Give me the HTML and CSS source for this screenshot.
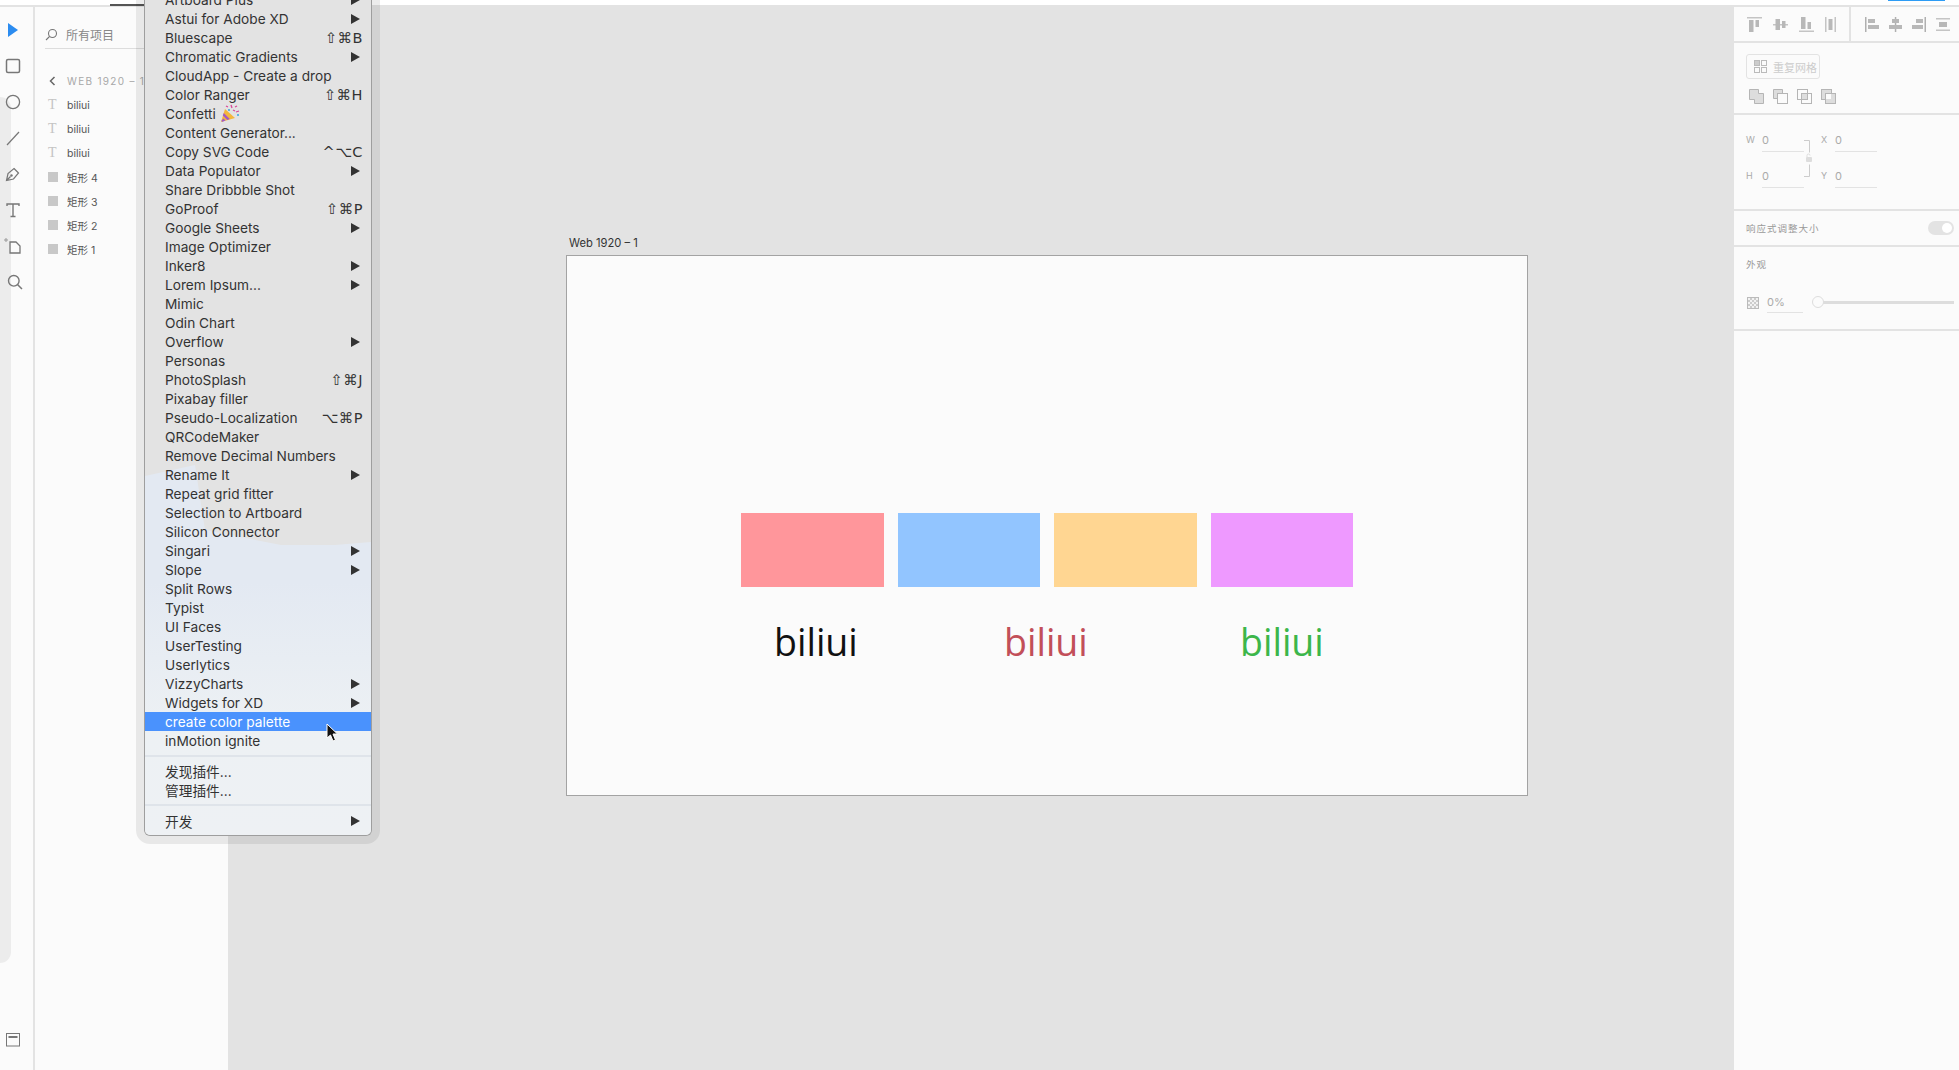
FILE: index.html

```html
<!DOCTYPE html>
<html>
<head>
  <meta charset="UTF-8">
  <title>XD plugins menu</title>
  <link rel="stylesheet" href="styles.css">
</head>
<body>
  <div class="topbar">
    <span class="tab-line"></span>
    <span class="share-line"></span>
  </div>

  <div class="main">
    <!-- tools -->
    <div class="toolbar">
      <span class="tool-edge"></span>
      <div class="tool"><svg width="14" height="16" viewBox="0 0 14 16"><path d="M2 1l10 7-10 7z" fill="#2b8cf0"/></svg></div>
      <div class="tool"><svg width="16" height="16" viewBox="0 0 16 16"><rect x="1.5" y="1.5" width="13" height="13" rx="1.5" fill="none" stroke="#777" stroke-width="1.5"/></svg></div>
      <div class="tool"><svg width="16" height="16" viewBox="0 0 16 16"><circle cx="8" cy="8" r="6.6" fill="none" stroke="#777" stroke-width="1.3"/></svg></div>
      <div class="tool"><svg width="16" height="16" viewBox="0 0 16 16"><path d="M2 15L14 2" fill="none" stroke="#777" stroke-width="1.2"/></svg></div>
      <div class="tool"><svg width="16" height="16" viewBox="0 0 16 16"><path d="M1.5 14.5l1.5-7 6-5 4.500 4.500-5 6zM1.500 14.500l4-4M9 2.500l4.500 4.500" fill="none" stroke="#777" stroke-width="1.200"/><circle cx="6.500" cy="9.500" r="1.200" fill="#777"/></svg></div>
      <div class="tool"><svg width="16" height="16" viewBox="0 0 16 16"><path d="M2 4V2h12v2M8 2v12M5.500 14.500h5" fill="none" stroke="#777" stroke-width="1.400"/></svg></div>
      <div class="tool"><svg width="18" height="18" viewBox="0 0 18 18"><path d="M6 5h6l4 4v7H6z" fill="none" stroke="#777" stroke-width="1.300"/><path d="M0 3h4M2 1v4" stroke="#999" stroke-width="1"/></svg></div>
      <div class="tool tool-zoom"><svg width="16" height="16" viewBox="0 0 16 16"><circle cx="6.800" cy="6.800" r="5.300" fill="none" stroke="#777" stroke-width="1.400"/><path d="M10.500 10.500l4.500 4.500" stroke="#777" stroke-width="1.500"/></svg></div>
      <div class="tool tool-bottom"><svg width="14" height="14" viewBox="0 0 14 14"><rect x="0.500" y="0.500" width="13" height="12.500" fill="none" stroke="#777"/><rect x="2.500" y="3" width="9" height="2" fill="#777"/></svg></div>
    </div>

    <!-- layers -->
    <div class="layers">
      <div class="search">
        <svg width="13" height="13" viewBox="0 0 13 13"><circle cx="7.500" cy="5.500" r="4" fill="none" stroke="#777" stroke-width="1.100"/><path d="M4.500 8.500L1 12" stroke="#777" stroke-width="1.100"/></svg>
        <span>所有项目</span>
      </div>
      <div class="crumb">
        <svg width="7" height="10" viewBox="0 0 7 10"><path d="M5.500 1L1.500 5l4 4" fill="none" stroke="#666" stroke-width="1.500"/></svg>
        <span>WEB 1920 – 1</span>
      </div>
      <div class="layer"><span class="layer-t">T</span>biliui</div>
      <div class="layer"><span class="layer-t">T</span>biliui</div>
      <div class="layer"><span class="layer-t">T</span>biliui</div>
      <div class="layer"><span class="layer-r"></span>矩形 4</div>
      <div class="layer"><span class="layer-r"></span>矩形 3</div>
      <div class="layer"><span class="layer-r"></span>矩形 2</div>
      <div class="layer"><span class="layer-r"></span>矩形 1</div>
    </div>

    <!-- canvas -->
    <div class="canvas">
      <div class="board-label">Web 1920 – 1</div>
      <div class="artboard">
        <div class="swatches">
          <div class="swatch pink"></div>
          <div class="swatch blue"></div>
          <div class="swatch orange"></div>
          <div class="swatch violet"></div>
        </div>
        <div class="words">
          <span class="word black">biliui</span>
          <span class="word red">biliui</span>
          <span class="word green">biliui</span>
        </div>
      </div>
    </div>

    <!-- properties -->
    <div class="props">
      <div class="sec sec-align">
        <div class="align-group left">
          <svg width="15" height="15" viewBox="0 0 15 15"><path d="M0 0h15v1.500H0z" fill="#c4c4c4"/><path d="M2 3h4.500v12H2zM8.500 3H12v7H8.500z" fill="#b8b8b8"/></svg>
          <svg width="15" height="15" viewBox="0 0 15 15"><path d="M0 7h15v1.500H0z" fill="#c4c4c4"/><path d="M2.500 2H7v11H2.500zM9 4h3.500v7H9z" fill="#b8b8b8"/></svg>
          <svg width="15" height="15" viewBox="0 0 15 15"><path d="M0 13.500h15V15H0z" fill="#c4c4c4"/><path d="M2 0h4.500v12H2zM8.500 5H12v7H8.500z" fill="#b8b8b8"/></svg>
          <svg width="11" height="15" viewBox="0 0 11 15"><path d="M0 0h1.500v15H0zM9.500 0H11v15H9.500z" fill="#c4c4c4"/><path d="M3.500 2h4v11h-4z" fill="#b8b8b8"/></svg>
        </div>
        <div class="align-group right">
          <svg width="14" height="15" viewBox="0 0 14 15"><path d="M0 0h1.500v15H0z" fill="#b0b0b0"/><path d="M3 2h7v4H3zM3 8h11v4H3z" fill="#b8b8b8"/></svg>
          <svg width="13" height="15" viewBox="0 0 13 15"><path d="M5.800 0h1.500v15H5.800z" fill="#b0b0b0"/><path d="M3 2h7v4H3zM0 8h13v4H0z" fill="#b8b8b8"/></svg>
          <svg width="14" height="15" viewBox="0 0 14 15"><path d="M12.500 0H14v15h-1.500z" fill="#b0b0b0"/><path d="M4 2h7v4H4zM0 8h11v4H0z" fill="#b8b8b8"/></svg>
          <svg width="14" height="15" viewBox="0 0 14 15"><path d="M0 1h14v1.500H0zM0 12.500h14V14H0z" fill="#c4c4c4"/><path d="M3 5h8v5H3z" fill="#b8b8b8"/></svg>
        </div>
      </div>

      <div class="sec sec-grid">
        <div class="grid-btn">
          <svg width="13" height="13" viewBox="0 0 13 13"><rect x="0.500" y="0.500" width="5" height="5" fill="#ccc" stroke="#bbb"/><rect x="7.500" y="0.500" width="5" height="5" fill="none" stroke="#bbb"/><rect x="0.500" y="7.500" width="5" height="5" fill="none" stroke="#bbb"/><rect x="7.500" y="7.500" width="5" height="5" fill="none" stroke="#bbb"/></svg>
          <span>重复网格</span>
        </div>
        <div class="bool-row">
          <svg width="15" height="15" viewBox="0 0 15 15"><path d="M.5.500h9v4h5v10h-9v-4h-5z" fill="#ddd" stroke="#b5b5b5"/></svg>
          <svg width="15" height="15" viewBox="0 0 15 15"><path d="M.5.500h9v4h-5v5h-4z" fill="#ddd" stroke="#b5b5b5"/><rect x="4.500" y="4.500" width="10" height="10" fill="#fbfbfb" stroke="#b5b5b5"/></svg>
          <svg width="15" height="15" viewBox="0 0 15 15"><rect x=".5" y=".5" width="10" height="10" fill="none" stroke="#b5b5b5"/><rect x="4.500" y="4.500" width="10" height="10" fill="none" stroke="#b5b5b5"/><rect x="5" y="5" width="5" height="5" fill="#ddd"/></svg>
          <svg width="15" height="15" viewBox="0 0 15 15"><rect x=".5" y=".5" width="10" height="10" fill="#ddd" stroke="#b5b5b5"/><rect x="4.500" y="4.500" width="10" height="10" fill="#ddd" stroke="#b5b5b5"/><rect x="5" y="5" width="5" height="5" fill="#fbfbfb"/></svg>
        </div>
      </div>

      <div class="sec sec-dims">
        <div class="field"><label>W</label><span>0</span></div>
        <div class="field"><label>X</label><span>0</span></div>
        <div class="field"><label>H</label><span>0</span></div>
        <div class="field"><label>Y</label><span>0</span></div>
        <svg class="lock" width="8" height="37" viewBox="0 0 8 37"><path d="M0 .5h5.500v12M0 36.500h5.500v-12" fill="none" stroke="#ccc"/><rect x="2" y="17" width="6" height="5" rx="1" fill="#ddd"/><path d="M3 17v-1.500a1.500 1.500 0 0 1 3 0" fill="none" stroke="#ddd"/></svg>
      </div>

      <div class="sec sec-toggle">
        <span class="sec-title">响应式调整大小</span>
        <span class="toggle"><i></i></span>
      </div>

      <div class="sec sec-look">
        <div class="sec-title">外观</div>
        <div class="opacity-row">
          <span class="checker"></span>
          <span class="percent">0%</span>
          <span class="slider"><i></i></span>
        </div>
      </div>
    </div>
  </div>

  <!-- plugin menu -->
  <div class="menu">
    <div class="item"><span>Artboard Plus</span><i class="arrow"></i></div>
    <div class="item"><span>Astui for Adobe XD</span><i class="arrow"></i></div>
    <div class="item"><span>Bluescape</span><b>⇧⌘B</b></div>
    <div class="item"><span>Chromatic Gradients</span><i class="arrow"></i></div>
    <div class="item"><span>CloudApp - Create a drop</span></div>
    <div class="item"><span>Color Ranger</span><b>⇧⌘H</b></div>
    <div class="item confetti"><span>Confetti</span>
      <svg width="20" height="19" viewBox="0 0 20 19"><path d="M1 18L5 5l10 9z" fill="#f4b73c"/><path d="M3.800 9l6 6-2.500 1-4.500-4.500zM1.500 16.500l2-2 2 2-3.500 1.500z" fill="#a35bc4"/><path d="M6 2l2 1M11 1l1 3M15 3l2-1M16 8l3-1M13 6l2 1" stroke="#d8479a" stroke-width="1.300"/><circle cx="9" cy="6" r="1" fill="#3aa6dd"/><circle cx="18" cy="11" r="1" fill="#3aa6dd"/></svg>
    </div>
    <div class="item"><span>Content Generator...</span></div>
    <div class="item"><span>Copy SVG Code</span><b>^⌥C</b></div>
    <div class="item"><span>Data Populator</span><i class="arrow"></i></div>
    <div class="item"><span>Share Dribbble Shot</span></div>
    <div class="item"><span>GoProof</span><b>⇧⌘P</b></div>
    <div class="item"><span>Google Sheets</span><i class="arrow"></i></div>
    <div class="item"><span>Image Optimizer</span></div>
    <div class="item"><span>Inker8</span><i class="arrow"></i></div>
    <div class="item"><span>Lorem Ipsum...</span><i class="arrow"></i></div>
    <div class="item"><span>Mimic</span></div>
    <div class="item"><span>Odin Chart</span></div>
    <div class="item"><span>Overflow</span><i class="arrow"></i></div>
    <div class="item"><span>Personas</span></div>
    <div class="item"><span>PhotoSplash</span><b>⇧⌘J</b></div>
    <div class="item"><span>Pixabay filler</span></div>
    <div class="item"><span>Pseudo-Localization</span><b>⌥⌘P</b></div>
    <div class="item"><span>QRCodeMaker</span></div>
    <div class="item"><span>Remove Decimal Numbers</span></div>
    <div class="item"><span>Rename It</span><i class="arrow"></i></div>
    <div class="item"><span>Repeat grid fitter</span></div>
    <div class="item"><span>Selection to Artboard</span></div>
    <div class="item"><span>Silicon Connector</span></div>
    <div class="item"><span>Singari</span><i class="arrow"></i></div>
    <div class="item"><span>Slope</span><i class="arrow"></i></div>
    <div class="item"><span>Split Rows</span></div>
    <div class="item"><span>Typist</span></div>
    <div class="item"><span>UI Faces</span></div>
    <div class="item"><span>UserTesting</span></div>
    <div class="item"><span>Userlytics</span></div>
    <div class="item"><span>VizzyCharts</span><i class="arrow"></i></div>
    <div class="item"><span>Widgets for XD</span><i class="arrow"></i></div>
    <div class="item active"><span>create color palette</span></div>
    <div class="item"><span>inMotion ignite</span></div>
    <div class="sep sep-first"></div>
    <div class="item"><span>发现插件...</span></div>
    <div class="item"><span>管理插件...</span></div>
    <div class="sep"></div>
    <div class="item"><span>开发</span><i class="arrow"></i></div>
  </div>

  <svg class="cursor" width="13" height="19" viewBox="0 0 13 19"><path d="M1 1v14l3.500-3 2.500 6 2.500-1-2.500-6h4.500z" fill="#111" stroke="#fff" stroke-width="1"/></svg>
</body>
</html>
```

FILE: styles.css

```css
* {
  box-sizing: border-box;
}
html, body {
  margin: 0;
  height: 1070px;
  overflow: hidden;
}
body {
  position: relative;
  background: #e3e3e3;
  font-family: Inter, "Noto Sans CJK SC", sans-serif;
  color: #333;
}

/* top strip */
.topbar {
  position: relative;
  height: 7px;
  background: #fff;
  border-bottom: 2px solid #e3e3e3;
}
.tab-line {
  position: absolute;
  left: 110px;
  top: 4px;
  width: 34px;
  height: 2px;
  background: #555;
}
.share-line {
  position: absolute;
  left: 1888px;
  top: 0;
  width: 57px;
  height: 1px;
  background: #2d9cf5;
}

.main {
  display: flex;
  height: 1063px;
}

/* tools */
.toolbar {
  position: relative;
  display: flex;
  flex-direction: column;
  width: 35px;
  padding-top: 5px;
  background: #fbfbfb;
  border-right: 2px solid #e3e3e3;
}
.tool-edge {
  position: absolute;
  left: 0;
  top: 90px;
  width: 11px;
  height: 866px;
  background: #ececec;
  border-radius: 0 11px 11px 0;
}
.tool {
  position: relative;
  display: flex;
  align-items: center;
  justify-content: center;
  width: 26px;
  height: 36px;
}
.tool-zoom {
  padding-left: 3px;
}
.tool-bottom {
  margin-top: auto;
  margin-bottom: 12px;
}

/* layers */
.layers {
  width: 193px;
  background: #fbfbfb;
  padding: 0 0 0 10px;
}
.search {
  display: flex;
  align-items: center;
  gap: 8px;
  height: 42px;
  padding-top: 14px;
  border-bottom: 1px solid #ddd;
  font-size: 12px;
  color: #888;
}
.crumb {
  display: flex;
  align-items: center;
  gap: 11px;
  height: 22px;
  margin-top: 21px;
  margin-bottom: 1px;
  padding-left: 4px;
  font-size: 10px;
  letter-spacing: 1.3px;
  color: #a8a8a8;
  white-space: nowrap;
}
.layer {
  display: flex;
  align-items: center;
  height: 24px;
  padding-left: 3px;
  font-size: 10.500px;
  color: #555;
}
.layer-t {
  width: 19px;
  font-family: "Liberation Serif", serif;
  font-size: 14px;
  color: #c4c4c4;
}
.layer-r {
  width: 10px;
  height: 10px;
  margin-right: 9px;
  background: #c8c8c8;
}

/* canvas */
.canvas {
  flex: 1;
  padding: 229px 0 0 338px;
  background: #e3e3e3;
}
.board-label {
  height: 19px;
  padding-left: 3px;
  font-size: 11.200px;
  line-height: 14px;
  color: #333;
}
.artboard {
  width: 962px;
  height: 541px;
  padding: 257px 0 0 174px;
  background: #fbfbfb;
  border: 1px solid #a3a3a3;
}
.swatches {
  display: flex;
  gap: 14px;
}
.swatch {
  width: 142.500px;
  height: 74px;
}
.pink {
  background: #ff969b;
}
.blue {
  background: #92c5ff;
}
.orange {
  background: #ffd692;
}
.violet {
  background: #ee99ff;
}
.words {
  display: flex;
  margin-top: 29px;
  padding-left: 33px;
  font-family: "Open Sans", sans-serif;
  font-size: 37.500px;
  line-height: 52px;
}
.word {
  width: 230px;
}
.word + .word + .word {
  margin-left: 6px;
}
.black {
  color: #111;
}
.red {
  color: #c24f59;
}
.green {
  color: #3cb64a;
}

/* properties */
.props {
  width: 225px;
  background: #fbfbfb;
}
.sec {
  border-bottom: 2px solid #e3e3e3;
}
.sec-align {
  display: flex;
  height: 36px;
}
.align-group {
  display: flex;
  align-items: center;
  gap: 11px;
  padding-top: 1px;
}
.align-group.left {
  width: 117px;
  padding-left: 13px;
  border-right: 2px solid #e3e3e3;
}
.align-group.right {
  gap: 10px;
  padding-left: 14px;
}
.sec-grid {
  height: 72px;
  padding: 11px 0 0 12px;
}
.grid-btn {
  display: flex;
  align-items: center;
  gap: 6px;
  width: 74px;
  height: 25px;
  padding-left: 7px;
  border: 1px solid #e3e3e3;
  border-radius: 3px;
  font-size: 11px;
  color: #ccc;
}
.bool-row {
  display: flex;
  gap: 9px;
  margin-top: 10px;
  padding-left: 3px;
}
.sec-dims {
  position: relative;
  display: grid;
  grid-template-columns: 58px 58px;
  column-gap: 15px;
  row-gap: 15px;
  align-content: start;
  height: 96px;
  padding: 16px 0 0 12px;
}
.field {
  display: flex;
  height: 21px;
  font-size: 11px;
  line-height: 18px;
  color: #aaa;
}
.field label {
  width: 16px;
  font-size: 9px;
  color: #aaa;
}
.field:nth-child(even) label {
  padding-left: 2px;
}
.field span {
  flex: 1;
  border-bottom: 1px solid #e3e3e3;
}
.lock {
  position: absolute;
  left: 70px;
  top: 25px;
}
.sec-toggle {
  display: flex;
  align-items: center;
  justify-content: space-between;
  height: 36px;
  padding: 0 5px 0 12px;
}
.sec-title {
  font-size: 9.500px;
  letter-spacing: 1px;
  color: #999;
}
.toggle {
  display: block;
  width: 26px;
  height: 14px;
  padding: 2px;
  border-radius: 7px;
  background: #e3e3e3;
}
.toggle i {
  display: block;
  width: 10px;
  height: 10px;
  margin-left: auto;
  border-radius: 50%;
  background: #fff;
}
.sec-look {
  height: 84px;
  padding: 10px 5px 0 12px;
}
.opacity-row {
  display: flex;
  align-items: center;
  margin-top: 21px;
}
.checker {
  width: 12px;
  height: 12px;
  margin: 0 8px 0 1px;
  border: 1px solid #bbb;
  background: repeating-conic-gradient(#ccc 0 25%, #f2f2f2 0 50%) 0 0 / 4px 4px;
}
.percent {
  width: 36px;
  height: 21px;
  border-bottom: 1px solid #e3e3e3;
  font-size: 11px;
  line-height: 21px;
  color: #aaa;
}
.slider {
  position: relative;
  flex: 1;
  height: 3px;
  margin-left: 12px;
  background: #ddd;
}
.slider i {
  position: absolute;
  left: -3px;
  top: -5px;
  width: 12px;
  height: 12px;
  border: 1px solid #ddd;
  border-radius: 50%;
  background: #fbfbfb;
}

/* plugin menu */
.menu {
  position: absolute;
  left: 144px;
  top: -10px;
  width: 228px;
  padding-bottom: 5px;
  background: #e3e3e3;
  border: 1px solid #9e9e9e;
  border-top: 0;
  border-radius: 0 0 6px 6px;
  box-shadow: 0 0 0 8px rgba(0, 0, 0, 0.075);
  font-size: 13.700px;
  color: #333;
}
.menu::before {
  content: "";
  position: absolute;
  inset: 0;
  border-radius: 0 0 5px 5px;
  background: linear-gradient(180deg, #e3e9f2 0%, #e3e9f2 70%, #edf1f4 88%, #eef1f4 100%);
  clip-path: polygon(0 486px, 50px 475px, 60px 540px, 136px 555px, 190px 555px, 100% 552px, 100% 100%, 0 100%);
}
.item {
  position: relative;
  display: flex;
  align-items: center;
  justify-content: space-between;
  height: 19px;
  padding: 0 11px 0 20px;
  white-space: nowrap;
}
.item b {
  margin-right: -3px;
  font-family: "DejaVu Sans", sans-serif;
  font-weight: 400;
  font-size: 14.500px;
  letter-spacing: 0.500px;
}
.arrow {
  width: 0;
  height: 0;
  border-left: 9px solid #333;
  border-top: 5px solid transparent;
  border-bottom: 5px solid transparent;
}
.item.active {
  background: #4a92fd;
  color: #fff;
}
.item.confetti {
  justify-content: flex-start;
  gap: 4px;
}
.sep {
  position: relative;
  height: 2px;
  margin: 5px 0;
  background: #dfe4ea;
}
.sep-first {
  margin-bottom: 4px;
}
.cursor {
  position: absolute;
  left: 326px;
  top: 723px;
}
```
